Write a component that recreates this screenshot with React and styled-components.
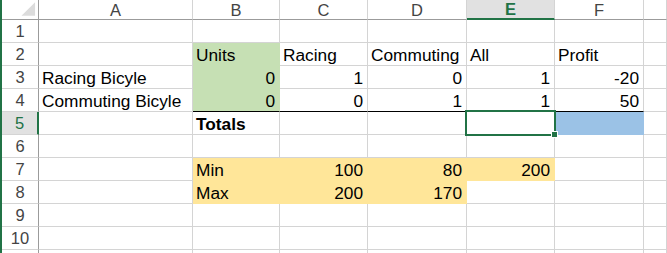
import React from 'react'
import styled, { createGlobalStyle } from 'styled-components'

const GlobalStyle = createGlobalStyle`
  html, body {
    margin: 0;
    padding: 0;
    background: #fff;
  }
  body {
    font-family: 'Liberation Sans', Arial, sans-serif;
    overflow: hidden;
  }
`

const GREEN = '#217346'
const GRID = '#d4d4d4'
const HEAD_LINE = '#9b9b9b'

const Sheet = styled.div`
  display: grid;
  grid-template-columns: 37px 154px 87px 88px 99px 88px 89px 1fr;
  grid-template-rows: 20px repeat(11, 23px);
  height: 253px;
  overflow: hidden;
  border-left: 2px solid ${GREEN};
  color: #000;
`

const Corner = styled.div`
  box-sizing: border-box;
  border-right: 1px solid ${HEAD_LINE};
  border-bottom: 1px solid ${HEAD_LINE};
  display: flex;
`

const ColHead = styled.div`
  box-sizing: border-box;
  border-right: 1px solid ${GRID};
  border-bottom: ${p => (p.$active ? `2px solid ${GREEN}` : `1px solid ${HEAD_LINE}`)};
  background: ${p => (p.$active ? '#e1e1e1' : '#fff')};
  color: ${p => (p.$active ? GREEN : '#444')};
  font-weight: ${p => (p.$active ? 700 : 400)};
  font-size: 16.5px;
  display: flex;
  align-items: center;
  justify-content: center;
  padding-top: 1px;
`

const RowHead = styled.div`
  box-sizing: border-box;
  border-right: ${p => (p.$active ? `2px solid ${GREEN}` : `1px solid ${HEAD_LINE}`)};
  border-bottom: 1px solid ${GRID};
  background: ${p => (p.$active ? '#e1e1e1' : '#fff')};
  color: ${p => (p.$active ? GREEN : '#444')};
  font-size: 16.5px;
  display: flex;
  align-items: center;
  justify-content: center;
  padding-top: 1px;
`

const Cell = styled.div`
  position: relative;
  box-sizing: border-box;
  border-right: 1px solid ${p => p.$fill || GRID};
  border-bottom: 1px solid ${p => p.$under || p.$fill || GRID};
  background: ${p => p.$fill || '#fff'};
  display: flex;
  align-items: flex-end;
  justify-content: ${p => (p.$num ? 'flex-end' : 'flex-start')};
  padding: 0 4px 0 3px;
  font-size: 17.3px;
  line-height: 20px;
  font-weight: ${p => (p.$bold ? 700 : 400)};
  white-space: nowrap;
`

const Selection = styled.div`
  position: absolute;
  left: -2px;
  top: -2px;
  right: -2px;
  bottom: -2px;
  border: 2px solid ${GREEN};
  pointer-events: none;
  z-index: 2;
`

const Handle = styled.div`
  position: absolute;
  right: -4px;
  bottom: -4px;
  width: 5px;
  height: 5px;
  background: ${GREEN};
  border: 1px solid #fff;
`

const COLS = ['A', 'B', 'C', 'D', 'E', 'F', '']

const FILL_GREEN = '#c6e0b4'
const FILL_YELLOW = '#ffe699'
const FILL_BLUE = '#9bc2e6'

// row data, columns A..G
const rows = [
  [],
  ['', 'Units', 'Racing', 'Commuting', 'All', 'Profit'],
  ['Racing Bicyle', 0, 1, 0, 1, -20],
  ['Commuting Bicyle', 0, 0, 1, 1, 50],
  ['', 'Totals'],
  [],
  ['', 'Min', 100, 80, 200],
  ['', 'Max', 200, 170],
  [],
  [],
  [],
]

const fillFor = (r, c) => {
  if (c === 1 && r >= 2 && r <= 4) return FILL_GREEN
  if (r === 7 && c >= 1 && c <= 4) return FILL_YELLOW
  if (r === 8 && c >= 1 && c <= 3) return FILL_YELLOW
  if (r === 5 && c === 5) return FILL_BLUE
  return null
}

const CornerMark = () => (
  <svg width="37" height="19" viewBox="0 0 37 19">
    <polygon points="34,2 34,16 20,16" fill="#dcdcdc" />
  </svg>
)

export default function App() {
  return (
    <>
      <GlobalStyle />
      <Sheet>
        <Corner>
          <CornerMark />
        </Corner>
        {COLS.map((c, i) => (
          <ColHead key={i} $active={c === 'E'}>
            {c}
          </ColHead>
        ))}
        {rows.map((row, ri) => {
          const r = ri + 1
          return (
            <React.Fragment key={r}>
              {/* row 11 only peeks in at the bottom edge, its number is hidden */}
              <RowHead $active={r === 5}>{r <= 10 ? r : ''}</RowHead>
              {COLS.map((_, ci) => {
                const v = row[ci]
                const isNum = typeof v === 'number'
                const fill = fillFor(r, ci)
                const under = r === 4 && ci >= 1 && ci <= 5 ? '#000' : null
                return (
                  <Cell
                    key={ci}
                    $fill={fill}
                    $under={under}
                    $num={isNum}
                    $bold={r === 5 && ci === 1}
                  >
                    {v === undefined ? '' : v}
                    {r === 5 && ci === 4 && (
                      <Selection>
                        <Handle />
                      </Selection>
                    )}
                  </Cell>
                )
              })}
            </React.Fragment>
          )
        })}
      </Sheet>
    </>
  )
}
